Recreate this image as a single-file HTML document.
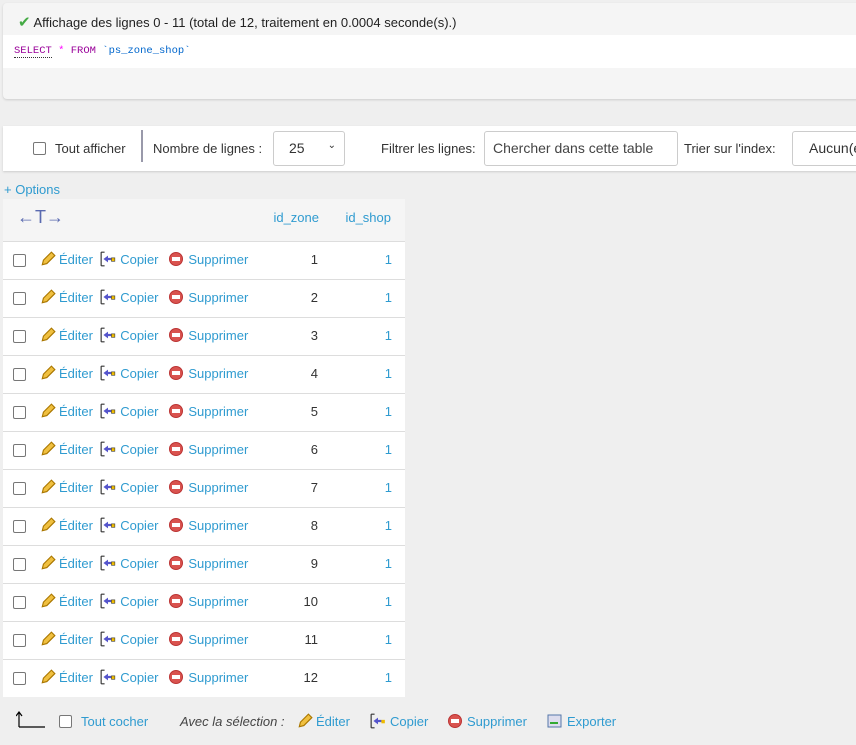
<!DOCTYPE html>
<html><head><meta charset="utf-8"><style>
*{box-sizing:border-box;margin:0;padding:0}
body{width:856px;height:745px;background:#efefef;font-family:"Liberation Sans",sans-serif;font-size:13px;color:#333;position:relative;overflow:hidden}
.a{color:#2f9bd0}
.abs{position:absolute}
.top{left:3px;top:3px;width:860px;height:96px;background:#f5f5f5;border-radius:4px;box-shadow:0 1px 2px #ccc}
.msg{left:15px;top:10px;font-size:13px;color:#222}
.sql{left:0;top:32px;width:860px;height:33px;background:#fff;font-family:"Liberation Mono",monospace;font-size:10.5px;padding:10px 11px}
.bar{left:3px;top:126px;width:860px;height:45px;background:#fff;box-shadow:0 1px 2px #ccc}
.cb{width:13px;height:13px;border:1px solid #777;border-radius:2px;background:#fff;display:inline-block}
.box{border:1px solid #ccc;border-radius:3px;background:#fff;height:35px;top:5px;font-size:14px;padding:8px}
table{position:absolute;left:3px;top:199px;width:402px;border-collapse:collapse;background:#fff;table-layout:fixed}
td{height:38px;border-top:1px solid #ddd;font-size:13px;vertical-align:middle;white-space:nowrap}
tr.h td{height:42px;border:none;background:#f5f5f5}
.pen{display:inline-block;width:16px;height:16px;vertical-align:-3px;margin-right:3px}
.del{display:inline-block;width:14px;height:14px;border-radius:50%;background:#d9534f;vertical-align:-2px;margin-right:5px;position:relative;border:1px solid #b33}
.del:after{content:"";position:absolute;left:2px;right:2px;top:4px;height:4px;background:#fff}
.cp{display:inline-block;width:16px;height:16px;vertical-align:-3px;margin-right:4px}
</style></head><body>
<div class="abs top">
 <div class="abs msg"><span style="color:#4a4;font-size:15px">✔</span> Affichage des lignes 0 - 11 (total de 12, traitement en 0.0004 seconde(s).)</div>
 <div class="abs sql"><span style="color:#909;border-bottom:1px dotted #333">SELECT</span> <span style="color:#f0f">*</span> <span style="color:#909">FROM</span> <span style="color:#06c">`ps_zone_shop`</span></div>
</div>
<div class="abs bar">
 <span class="abs cb" style="left:30px;top:16px"></span>
 <span class="abs" style="left:52px;top:15px">Tout afficher</span>
 <span class="abs" style="left:138px;top:4px;width:2px;height:32px;background:#99a"></span>
 <span class="abs" style="left:150px;top:15px">Nombre de lignes :</span>
 <div class="abs box" style="left:270px;width:72px;padding-left:15px">25 <span style="position:absolute;right:8px;font-size:10px">⌄</span></div>
 <span class="abs" style="left:378px;top:15px">Filtrer les lignes:</span>
 <div class="abs box" style="left:481px;width:194px;color:#444">Chercher dans cette table</div>
 <span class="abs" style="left:681px;top:15px">Trier sur l'index:</span>
 <div class="abs box" style="left:789px;width:80px;padding-left:16px">Aucun(e)</div>
</div>
<div class="abs a" style="left:4px;top:182px">+ Options</div>
<svg class="abs" style="left:218px;top:205px" width="12" height="8"><path d="M0 0h12L6 6z" fill="#333"/></svg>
<table>
<colgroup><col style="width:250px"><col style="width:84px"><col style="width:68px"></colgroup>
<tr class="h"><td style="padding-left:14px;color:#5a6ab0;font-size:18px;vertical-align:top;padding-top:8px">←T→</td><td class="a" style="text-align:right;padding-right:18px;padding-bottom:4px">id_zone</td><td class="a" style="text-align:right;padding-right:14px;padding-bottom:4px">id_shop</td></tr>
</table>
<script>
var s="";for(var i=1;i<=12;i++){s+='<tr><td style="padding-left:10px;padding-bottom:2px"><span class="cb" style="vertical-align:-3px"></span><span style="margin-left:14px"></span><svg class="pen" viewBox="0 0 14 14"><path d="M2 12l1-4 7-7 3 3-7 7z" fill="#f0c040" stroke="#a70" stroke-width="1"/></svg><span class="a">Éditer</span>&nbsp; <svg class="cp" viewBox="0 0 14 14"><path d="M1 1h3M1 13h3M1 1v12" stroke="#333" fill="none"/><path d="M3 7l4-3v2h3v2H7v2z" fill="#55c"/><rect x="10" y="6" width="3" height="3" fill="#eb0" stroke="#333" stroke-width=".5"/></svg><span class="a">Copier</span>&nbsp;&nbsp; <span class="del"></span><span class="a">Supprimer</span></td><td style="text-align:right;padding-right:19px;padding-bottom:2px">'+i+'</td><td class="a" style="text-align:right;padding-right:13px;padding-bottom:2px">1</td></tr>';}
document.querySelector("table tbody").insertAdjacentHTML("beforeend",s);
</script>
<svg class="abs" style="left:16px;top:711px" width="30" height="18"><path d="M3 16V2M0 5l3-4 3 4M3 16h26" stroke="#000" fill="none" stroke-width="1.2"/></svg>
<span class="abs cb" style="left:59px;top:715px"></span>
<span class="abs a" style="left:81px;top:714px">Tout cocher</span>
<span class="abs" style="left:180px;top:714px;font-style:italic;color:#444">Avec la sélection :</span>
<span class="abs" style="left:297px;top:713px"><svg class="pen" viewBox="0 0 14 14"><path d="M2 12l1-4 7-7 3 3-7 7z" fill="#f0c040" stroke="#a70"/></svg><span class="a">Éditer</span></span>
<span class="abs" style="left:370px;top:713px"><svg class="cp" viewBox="0 0 14 14"><path d="M1 1h3M1 13h3M1 1v12" stroke="#333" fill="none"/><path d="M3 7l4-3v2h3v2H7v2z" fill="#55c"/><rect x="10" y="6" width="3" height="3" fill="#eb0"/></svg><span class="a">Copier</span></span>
<span class="abs" style="left:448px;top:714px"><span class="del"></span><span class="a">Supprimer</span></span>
<span class="abs" style="left:547px;top:713px"><svg class="cp" viewBox="0 0 16 14"><rect x="1" y="1" width="13" height="12" fill="#dde" stroke="#57a"/><path d="M3 9h8" stroke="#3a3" stroke-width="2"/></svg><span class="a">Exporter</span></span>
</body></html>
